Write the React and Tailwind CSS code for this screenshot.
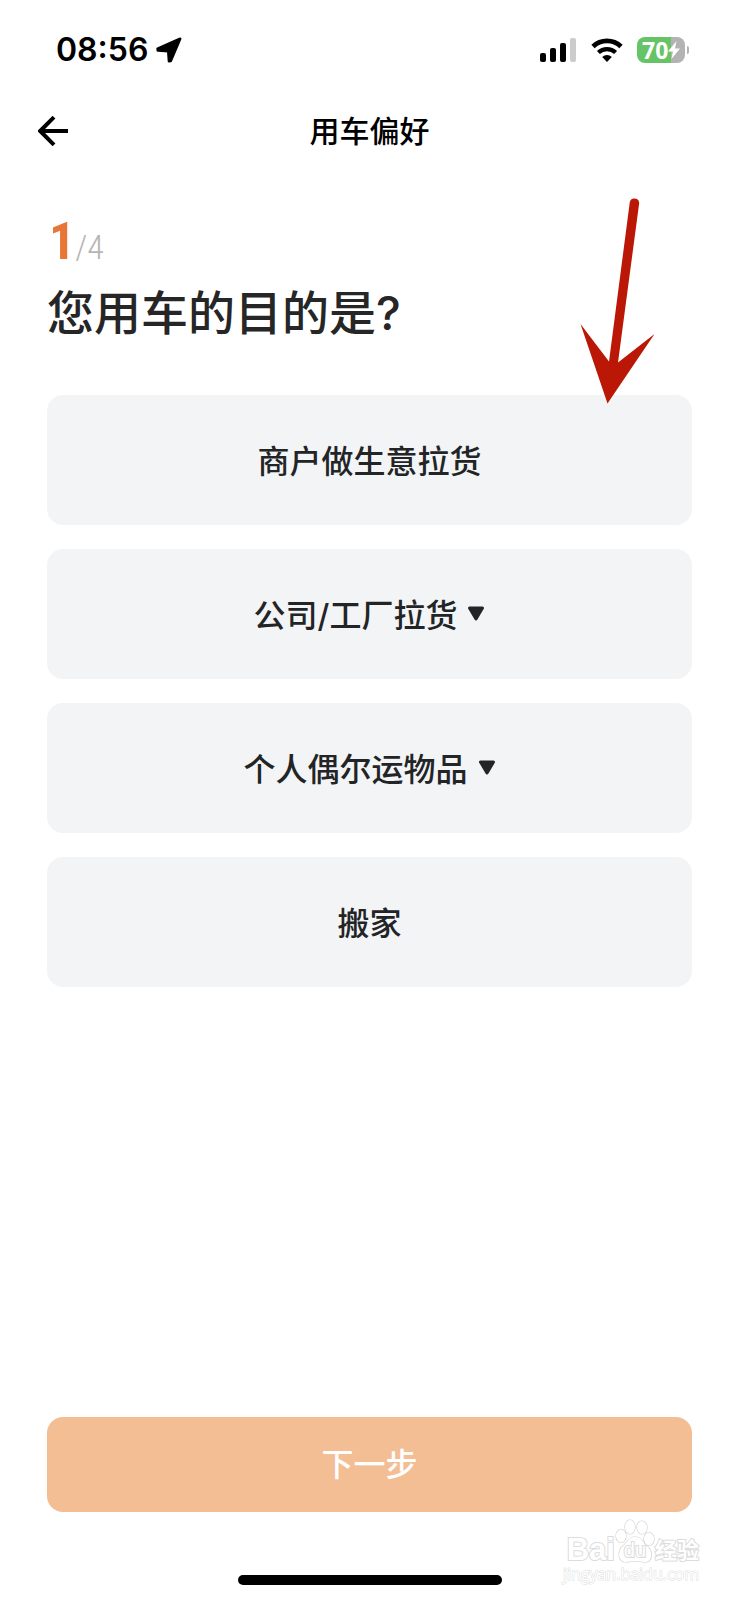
const cjk = "font-['Inter','Noto_Sans_CJK_SC',sans-serif]";

function StatusBar() {
  return (
    <div className="flex h-[100px] items-center justify-between pl-14 pr-[50px]">
      <div className="flex items-center gap-2 text-black">
        <time className="font-['Inter',sans-serif] text-[32px] leading-10 font-semibold">08:56</time>
        <svg className="size-[26px]" viewBox="0 0 24 24" aria-hidden="true">
          <path
            d="M22.3 1.6 13.6 22.2l-1.6.2-.7-9.2-9.6-.7-.2-1.7Z"
            stroke="black"
            strokeWidth="2.4"
            strokeLinejoin="round"
          />
        </svg>
      </div>
      <div className="flex items-center gap-3.5">
        <svg className="h-6 w-[38px]" viewBox="0 0 38 24" aria-label="信号">
          <rect x="1" y="15" width="6" height="9" rx="2" />
          <rect x="11" y="10" width="6" height="14" rx="2" />
          <rect x="21" y="5" width="6" height="19" rx="2" />
          <rect x="31" y="0" width="6" height="24" rx="2" fill="#cccccc" />
        </svg>
        <svg className="h-6 w-8" viewBox="0 0 32 24" aria-label="无线网络" fill="none" stroke="black">
          <path d="M2 8.6a20.2 20.2 0 0 1 28 0" strokeWidth="4.8" />
          <path d="M7.4 14.6a12.4 12.4 0 0 1 17.2 0" strokeWidth="4.2" />
          <path d="M16 24 11.2 19a7 7 0 0 1 9.6 0Z" fill="black" stroke="none" />
        </svg>
        <div className="flex items-center gap-0.5">
          <div className="flex h-[26px] w-12 items-center rounded-lg bg-linear-to-r from-[#66c466] from-70% to-[#b3b3b3] to-70% pl-[5px] text-white">
            <span className="font-['Open_Sans',sans-serif] text-[23px] leading-6 font-bold">70</span>
            <svg className="h-5 w-3" viewBox="0 0 12 20" aria-hidden="true">
              <path d="M8.5 1 0 11.6h5L3.4 19 12 8.6H7Z" fill="white" />
            </svg>
          </div>
          <span className="h-2 w-0.5 rounded-r-full bg-[#b3b3b3]" />
        </div>
      </div>
    </div>
  );
}

function Header() {
  return (
    <header className="grid h-[62px] grid-cols-[1fr_auto_1fr] items-center px-[38px]">
      <button type="button" aria-label="返回" className="size-[30px]">
        <svg viewBox="0 0 30 30" fill="none" stroke="black" strokeWidth="4">
          <path d="M30 15H2M16 1.2 2.2 15 16 28.8" />
        </svg>
      </button>
      <h1 className="text-3xl leading-10 font-medium text-black">用车偏好</h1>
    </header>
  );
}

function Option({ label, expandable }) {
  return (
    <button
      type="button"
      className="flex h-[130px] w-full items-center justify-center gap-2.5 rounded-2xl bg-[#f3f4f6] pt-1 text-[32px] leading-10 font-medium text-[#222426]"
    >
      {label}
      {expandable && (
        <svg className="mb-1 h-4 w-[18px]" viewBox="0 0 18 16" aria-hidden="true">
          <path d="M2.5 2h13L9 13Z" fill="#222426" stroke="#222426" strokeWidth="3" strokeLinejoin="round" />
        </svg>
      )}
    </button>
  );
}

function PointerArrow() {
  return (
    <svg className="pointer-events-none absolute top-[197px] right-[84px] h-[207px] w-[75px]" viewBox="0 0 75 207" aria-hidden="true">
      <path
        d="M49.8 5a4.8 4.8 0 0 1 9.4 1L38 165.5 74.5 137 27.5 206.5.5 127 29 164.5Z"
        fill="#bb1706"
      />
    </svg>
  );
}

function Watermark() {
  return (
    <div className="pointer-events-none absolute right-10 bottom-4 flex flex-col items-end text-white [paint-order:stroke] [-webkit-text-stroke:2px_#dcdcdc]">
      <div className="flex items-end">
        <span className="font-['Liberation_Sans',sans-serif] text-[31px] leading-7 font-bold">Bai</span>
        <span className="relative flex h-[45px] w-10 items-end justify-center">
          <svg className="absolute top-0 left-0 h-[45px] w-10" viewBox="0 0 40 45" fill="white" stroke="#cfcfcf" strokeWidth="1.2">
            <ellipse cx="6" cy="17" rx="5" ry="6.5" />
            <ellipse cx="15" cy="8" rx="5" ry="7" />
            <ellipse cx="27" cy="8.5" rx="5" ry="6.5" />
            <ellipse cx="34" cy="20" rx="5" ry="6.5" />
            <path d="M20 18c-7 0-8 6-12 9-6 5-5 16 3 16 4 0 5-1 9-1s6 1 10 1c8 0 8-11 2-16-4-3-5-9-12-9Z" />
          </svg>
          <span className="relative font-['Liberation_Sans',sans-serif] text-xl leading-7">du</span>
        </span>
        <span className="text-[22px] leading-7 font-bold">经验</span>
      </div>
      <span className="font-['Open_Sans',sans-serif] text-base leading-5 [-webkit-text-stroke:1px_#dcdcdc]">
        jingyan.baidu.com
      </span>
    </div>
  );
}

const options = [
  { label: "商户做生意拉货" },
  { label: "公司/工厂拉货", expandable: true },
  { label: "个人偶尔运物品", expandable: true },
  { label: "搬家" },
];

export default function App() {
  return (
    <div className={`relative flex min-h-screen flex-col bg-white ${cjk}`}>
      <StatusBar />
      <Header />
      <main className="flex grow flex-col px-[47px] pt-[50px]">
        <p className="flex items-baseline pl-0.5 font-['Roboto_Condensed','Roboto',sans-serif] leading-[60px]">
          <span className="text-[52px] leading-[60px] font-bold text-[#e77637]">1</span>
          <span className="text-[34px] leading-[60px] font-light text-[#b5b5b5]">/4</span>
        </p>
        <h2 className="text-[47px] leading-[72px] font-medium text-[#262626]">您用车的目的是?</h2>
        <div className="mt-[46px] flex flex-col gap-6">
          {options.map((option) => (
            <Option key={option.label} {...option} />
          ))}
        </div>
        <button
          type="button"
          className="mt-auto h-[95px] w-full rounded-2xl bg-[#f3be93] text-[32px] leading-10 font-medium text-white"
        >
          下一步
        </button>
      </main>
      <footer className="flex h-[88px] items-end justify-center pb-[15px]">
        <div className="h-2.5 w-[264px] rounded-full bg-black" />
      </footer>
      <PointerArrow />
      <Watermark />
    </div>
  );
}
